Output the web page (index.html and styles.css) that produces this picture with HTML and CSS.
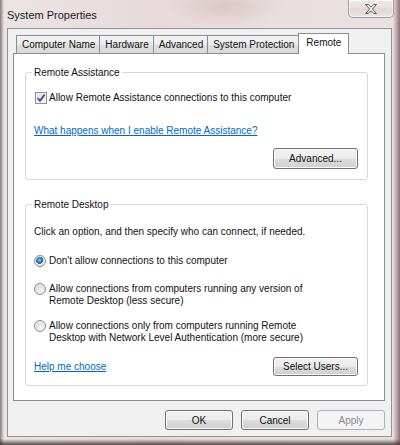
FILE: index.html
```html
<!DOCTYPE html>
<html>
<head>
<meta charset="utf-8">
<link rel="stylesheet" href="styles.css">
</head>
<body>
<div class="window">
  <div class="titlebar">
    <div class="title">System Properties</div>
    <div class="close">
      <svg width="12" height="10" viewBox="0 0 12 10"><polygon points="0.5,0.5 3.3,0.5 6,3.2 8.7,0.5 11.5,0.5 7.4,5 11.5,9.5 8.7,9.5 6,6.8 3.3,9.5 0.5,9.5 4.6,5" fill="#f6f2f2" stroke="#5e5a5b" stroke-width="1" stroke-linejoin="round"/></svg>
    </div>
  </div>
  <div class="client">
    <div class="tabs">
      <div class="tab">Computer Name</div>
      <div class="tab">Hardware</div>
      <div class="tab">Advanced</div>
      <div class="tab">System Protection</div>
      <div class="tab active">Remote</div>
    </div>
    <div class="panel">
      <div class="group ra">
        <div class="legend">Remote Assistance</div>
        <div class="check-row">
          <span class="checkbox"><svg width="10" height="10" viewBox="0 0 10 10"><path d="M1.5 5 L4 7.8 L8.6 1.6" fill="none" stroke="#3b4f8c" stroke-width="1.8"/></svg></span>
          <span>Allow Remote Assistance connections to this computer</span>
        </div>
        <a class="link ra-link">What happens when I enable Remote Assistance?</a>
        <div class="btn-row"><button class="btn btn-wide">Advanced...</button></div>
      </div>
      <div class="group rd">
        <div class="legend">Remote Desktop</div>
        <p class="intro">Click an option, and then specify who can connect, if needed.</p>
        <div class="radio-row r1"><span class="radio on"></span><span>Don't allow connections to this computer</span></div>
        <div class="radio-row r2"><span class="radio"></span><span>Allow connections from computers running any version of<br>Remote Desktop (less secure)</span></div>
        <div class="radio-row r3"><span class="radio"></span><span>Allow connections only from computers running Remote<br>Desktop with Network Level Authentication (more secure)</span></div>
        <div class="foot-row"><a class="link">Help me choose</a><button class="btn btn-wide btn-short">Select Users...</button></div>
      </div>
    </div>
    <div class="actions">
      <button class="btn btn-act">OK</button>
      <button class="btn btn-act">Cancel</button>
      <button class="btn btn-act" disabled>Apply</button>
    </div>
  </div>
</div>
</body>
</html>
```

FILE: styles.css
```css
html, body {
  margin: 0;
  padding: 0;
}
body {
  width: 400px;
  height: 445px;
  overflow: hidden;
  font-family: "Liberation Sans", Arial, sans-serif;
  font-size: 10px;
  color: #111111;
  background:
    linear-gradient(to right, rgba(50, 35, 40, 0.55) 0, rgba(50, 35, 40, 0) 4px),
    linear-gradient(to left, rgba(80, 40, 55, 0.6) 0, rgba(80, 40, 55, 0) 7px),
    linear-gradient(to top, rgba(30, 22, 24, 0.75) 0, rgba(30, 22, 24, 0) 6px),
    radial-gradient(ellipse 60px 22px at 225px 6px, rgba(200, 170, 172, 0.45), rgba(200, 170, 172, 0)),
    linear-gradient(to right, #ece3e3, #e8dadb 40%, #eadfdf 60%, #ebe0e0);
}
.window {
  width: 400px;
  height: 445px;
}
.titlebar {
  height: 28px;
  display: flex;
  justify-content: space-between;
  align-items: flex-start;
}
.title {
  padding: 8px 0 0 7px;
  font-size: 11px;
  line-height: 14px;
  color: #1a1a1a;
}
.close {
  box-sizing: border-box;
  width: 46px;
  height: 18px;
  margin-right: 6px;
  border: 1px solid #a39a9b;
  border-top: none;
  border-radius: 0 0 5px 5px;
  background: linear-gradient(#f1e9e9, #e8dede 50%, #e2d6d6 50%, #ebe3e3);
  box-shadow: inset 0 0 0 1px rgba(255, 255, 255, 0.6);
  display: flex;
  align-items: center;
  justify-content: center;
}
.client {
  box-sizing: border-box;
  margin-left: 7px;
  width: 385px;
  height: 409px;
  border: 1px solid #8e9297;
  background: #f0f0f0;
  padding: 4px 6px 0 5px;
}
.tabs {
  display: flex;
  align-items: flex-end;
  height: 20px;
  padding-left: 3px;
}
.tab {
  box-sizing: border-box;
  height: 18px;
  line-height: 17px;
  padding: 0 4px 0 5px;
  margin-right: -1px;
  border: 1px solid #898c95;
  border-bottom: none;
  background: linear-gradient(#f3f3f3, #ebebeb 50%, #dedede 50%, #d9d9d9);
  white-space: nowrap;
}
.tab.active {
  position: relative;
  z-index: 1;
  height: 21px;
  line-height: 18px;
  margin-bottom: -1px;
  padding: 0 7px;
  background: #ffffff;
}
.panel {
  box-sizing: border-box;
  height: 348px;
  border: 1px solid #898c95;
  background: #ffffff;
  padding: 0 16px 0 11px;
}
.group {
  border: 1px solid #d5d9dc;
  border-radius: 3px;
  padding: 0 9px 10px 9px;
}
.ra {
  margin-top: 18px;
}
.rd {
  margin-top: 24px;
  padding-bottom: 9px;
}
.legend {
  width: fit-content;
  margin: -7px 0 0 -3px;
  padding: 0 2px;
  line-height: 13px;
  background: #ffffff;
}
.check-row {
  display: flex;
  align-items: center;
  gap: 2px;
  height: 13px;
  margin-top: 12px;
}
.checkbox {
  box-sizing: border-box;
  width: 12px;
  height: 12px;
  border: 1px solid #8f8f8f;
  background: linear-gradient(135deg, #dcdcdc, #f8f8f8);
  box-shadow: inset 0 0 0 1px #f4f4f4;
  display: flex;
  align-items: center;
  justify-content: center;
}
.link {
  color: #0066cc;
  text-decoration: underline;
  line-height: 13px;
}
.ra-link {
  display: block;
  width: fit-content;
  margin: 20px 0 0 -1px;
}
.btn-row {
  display: flex;
  justify-content: flex-end;
  margin-top: 11px;
}
.btn {
  box-sizing: border-box;
  padding: 0;
  border: 1px solid #707070;
  border-radius: 3px;
  background: linear-gradient(#f2f2f2, #ebebeb 50%, #dddddd 50%, #cfcfcf);
  box-shadow: inset 0 0 0 1px #fbfbfb;
  font: inherit;
  color: #111111;
}
.btn:disabled {
  border-color: #adb2b5;
  background: #f4f4f4;
  box-shadow: none;
  color: #8a8a8a;
}
.btn-wide {
  width: 85px;
  height: 21px;
}
.btn-short {
  height: 19px;
}
.intro {
  margin: 14px 0 0 -1px;
  line-height: 13px;
}
.radio-row {
  display: flex;
  align-items: flex-start;
  gap: 3px;
  margin-left: -1px;
  line-height: 12px;
}
.r1 { margin-top: 17px; }
.r2 { margin-top: 16px; }
.r3 { margin-top: 13px; }
.radio {
  box-sizing: border-box;
  flex: none;
  width: 12px;
  height: 12px;
  border: 1px solid #8c8c8c;
  border-radius: 50%;
  background: radial-gradient(circle at 60% 65%, #f6f6f6, #d4d4d4 80%);
  box-shadow: inset 0 0 0 1px #f2f2f2;
}
.radio.on {
  background:
    radial-gradient(circle at 45% 40%, #8fd0f0 0, #2a86c8 2.2px, #1a5a9a 3.6px, transparent 3.8px),
    radial-gradient(circle, #f6f6f6, #dadada 80%);
}
.foot-row {
  display: flex;
  justify-content: space-between;
  align-items: center;
  margin: 13px 0 0 -1px;
}
.actions {
  display: flex;
  justify-content: flex-end;
  gap: 8px;
  margin-top: 9px;
}
.btn-act {
  width: 68px;
  height: 20px;
}
```
